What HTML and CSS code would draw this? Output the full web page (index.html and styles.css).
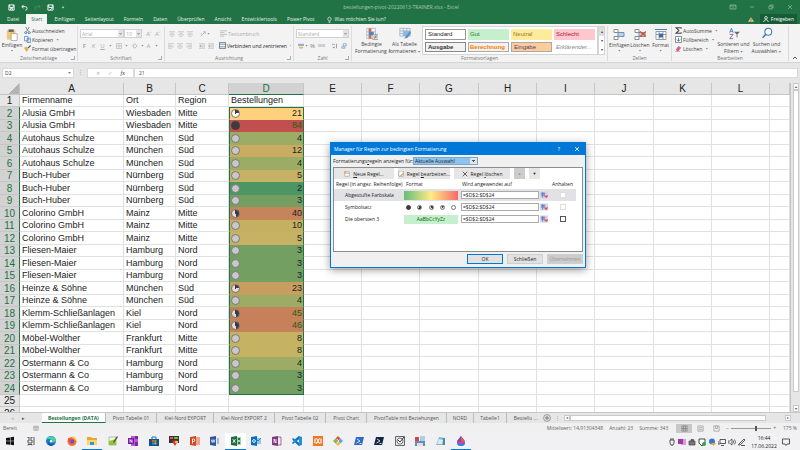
FILE: index.html
```html
<!DOCTYPE html>
<html lang="de">
<head>
  <meta charset="UTF-8">
  <meta name="viewport" content="width=device-width, initial-scale=1">
  <title>bestellungen-pivot-20220613-TRAINER.xlsx - Excel</title>
  <link rel="stylesheet" href="styles.css">
</head>
<body>
  <svg class="defs" aria-hidden="true">
    <symbol id="left" viewBox="0 0 8 8"><path d="M0 1h8M0 3h5M0 5h8M0 7h5" stroke="#bbb"/></symbol>
    <symbol id="center" viewBox="0 0 8 8"><path d="M0 1h8M2 3h4M0 5h8M2 7h4" stroke="#bbb"/></symbol>
    <symbol id="right" viewBox="0 0 8 8"><path d="M0 1h8M3 3h5M0 5h8M3 7h5" stroke="#bbb"/></symbol>
    <symbol id="indent" viewBox="0 0 8 8"><path d="M0 1h8M4 3h4M4 5h4M0 7h8" stroke="#bbb"/><path d="M3 2v4L0 4z" fill="#9ab"/></symbol>
    <symbol id="picker" viewBox="0 0 9 8"><rect width="9" height="8" fill="#cfd8ec"/><path d="M1 2h5M1 4h4M3 1v6" stroke="#5574b8"/><path d="M4 3l4 4M5 6h3V4" stroke="#d33" fill="none"/></symbol>
    <symbol id="cells" viewBox="0 0 12 12"><path d="M1 1h4v3H1zM1 8h4v3H1z" fill="#fff" stroke="#8a8a8a"/><path d="M5 4h6v4H5z" fill="#bcd3ea" stroke="#6d91b5"/></symbol>
  </svg>

  <header class="titlebar">
    <div class="quick">
      <button aria-label="Speichern"><svg viewBox="0 0 8 8"><path d="M1 1h6v6H1zM2 1v3h4V1M3 7V5h2v2" fill="none" stroke="#fff"/></svg></button>
      <button aria-label="Rückgängig"><svg viewBox="0 0 8 8"><path d="M3 1L1 3l2 2M1 3h4a2 2 0 0 1 0 4" fill="none" stroke="#fff"/></svg></button>
      <button aria-label="Wiederholen"><svg viewBox="0 0 8 8"><path d="M5 1l2 2-2 2M7 3H3a2 2 0 0 0 0 4" fill="none" stroke="#4a8e68"/></svg></button>
      <button aria-label="Speichern unter"><svg viewBox="0 0 8 8"><path d="M1 1h6v6H1zM2 1v3h4V1" fill="none" stroke="#fff"/><path d="M3 7l4-3" stroke="#fff"/></svg></button>
      <button aria-label="Anpassen"><svg viewBox="0 0 8 8"><path d="M2 3h3L3.500 5z" fill="#cfe3d7"/></svg></button>
    </div>
    <span class="doc">bestellungen-pivot-20220613-TRAINER.xlsx - Excel</span>
    <div class="winbuttons">
      <button aria-label="Menüband"><svg viewBox="0 0 8 8"><path d="M1 2h6v4H1zM1 3h6M4 6V4" fill="none" stroke="#8fbda1" stroke-width=".7"/></svg></button>
      <button aria-label="Minimieren"><svg viewBox="0 0 8 8"><path d="M2 4h4" stroke="#8fbda1" stroke-width=".7"/></svg></button>
      <button aria-label="Wiederherstellen"><svg viewBox="0 0 8 8"><path d="M2 3h3v3H2zM3 3V2h3v3H5" fill="none" stroke="#8fbda1" stroke-width=".7"/></svg></button>
      <button aria-label="Beenden"><svg viewBox="0 0 8 8"><path d="M2 2l4 4M6 2L2 6" stroke="#8fbda1" stroke-width=".7"/></svg></button>
    </div>
  </header>

  <nav class="tabs">
    <a href="#">Datei</a>
    <a href="#" class="active">Start</a>
    <a href="#">Einfügen</a>
    <a href="#">Seitenlayout</a>
    <a href="#">Formeln</a>
    <a href="#">Daten</a>
    <a href="#">Überprüfen</a>
    <a href="#">Ansicht</a>
    <a href="#">Entwicklertools</a>
    <a href="#">Power Pivot</a>
    <a href="#" class="tell"><svg viewBox="0 0 6 8"><path d="M2 5a2 2 0 1 1 2 0v1H2zM2 7.500h2" fill="none" stroke="#fff" stroke-width=".8"/></svg>Was möchten Sie tun?</a>
    <svg class="warn" viewBox="0 0 8 8"><path d="M4 1l4 6H0z" fill="#f6c58a"/><path d="M4 3v2M4 5.500v1" stroke="#6b4a20"/></svg>
    <a href="#" class="share"><svg viewBox="0 0 8 8"><circle cx="4" cy="2.500" r="1.800" fill="none" stroke="#fff"/><path d="M1 8c0-4 6-4 6 0" fill="none" stroke="#fff"/></svg>Freigeben</a>
  </nav>

  <section class="ribbon">
    <div class="group clipboard">
      <div class="tools">
        <button class="big"><svg viewBox="0 0 14 14"><path d="M1 2h10v11H1z" fill="#efc878"/><path d="M3 1h6v3H3z" fill="#666"/><path d="M6 6h7v8H6z" fill="#fff" stroke="#888" stroke-width=".7"/></svg>Einfügen<i></i></button>
        <div class="stack">
          <button><svg viewBox="0 0 8 8"><path d="M2 0l3 5M6 0L3 5" stroke="#777"/><circle cx="2" cy="6.500" r="1.200" fill="none" stroke="#2e75b6"/><circle cx="6" cy="6.500" r="1.200" fill="none" stroke="#2e75b6"/></svg>Ausschneiden</button>
          <button><svg viewBox="0 0 8 8"><path d="M.5.500h4v5h-4zM3.500 2.500h4v5h-4z" fill="#fff" stroke="#3b78b5" stroke-width=".8"/><path d="M4.500 4h2M4.500 6h2" stroke="#3b78b5" stroke-width=".6"/></svg>Kopieren <i></i></button>
          <button><svg viewBox="0 0 8 8"><path d="M0 3l3-1 2 3-2 3z" fill="#e9a94b"/><path d="M4 3l3-3 1 1-3 3z" fill="#555"/></svg>Format übertragen</button>
        </div>
      </div>
      <h2 class="launch">Zwischenablage</h2>
    </div>

    <div class="group font">
      <div class="tools lines">
        <div class="line">
          <select class="fname" aria-label="Schriftart"><option>Arial</option></select><select class="fsize" aria-label="Schriftgrad"><option>10</option></select>
          <button class="glyph large">A˄</button><button class="glyph">A˅</button>
        </div>
        <div class="line">
          <button class="glyph"><b>F</b></button><button class="glyph"><em>K</em></button><button class="glyph"><u>U</u></button><i></i>
          <button class="ic"><svg viewBox="0 0 8 8"><path d="M.5.500h7v7h-7zM4 0v8M0 4h8" fill="none" stroke="#bbb"/></svg></button><i></i>
          <button class="ic"><svg viewBox="0 0 8 8"><path d="M1 3l3-2 3 3-4 3z" fill="none" stroke="#aaa"/></svg></button><i></i>
          <button class="glyph">A</button><i></i>
        </div>
      </div>
      <h2 class="launch">Schriftart</h2>
    </div>

    <div class="group align">
      <div class="tools lines">
        <div class="line">
          <button class="ic"><svg><use href="#center"/></svg></button><button class="ic"><svg><use href="#center"/></svg></button><button class="ic"><svg><use href="#center"/></svg></button>
          <button class="ic gap"><svg viewBox="0 0 8 8"><path d="M1 7l6-6M4 1h3v3M1 3l2 2" fill="none" stroke="#aaa"/></svg></button><i></i>
          <button class="text pale wrap"><svg><use href="#left"/></svg>Textumbruch</button>
        </div>
        <div class="line">
          <button class="ic"><svg><use href="#left"/></svg></button><button class="ic"><svg><use href="#center"/></svg></button><button class="ic"><svg><use href="#right"/></svg></button>
          <button class="ic gap"><svg><use href="#indent"/></svg></button><button class="ic"><svg><use href="#indent"/></svg></button>
          <button class="text merge"><svg viewBox="0 0 8 8"><path d="M.5.500h7v7h-7zM0 2.500h8M0 5.500h8" fill="#fff" stroke="#3d5f82" stroke-width=".8"/></svg>Verbinden und zentrieren <i></i></button>
        </div>
      </div>
      <h2 class="launch">Ausrichtung</h2>
    </div>

    <div class="group number">
      <div class="tools lines">
        <div class="line"><select class="fformat" aria-label="Zahlenformat"><option>Standard</option></select></div>
        <div class="line">
          <button class="ic"><svg viewBox="0 0 8 8"><path d="M0 1h8v3H0z" fill="#8db6dc"/><ellipse cx="4" cy="6" rx="3" ry="1.500" fill="#efbb66"/></svg></button><i></i>
          <button class="glyph dark">%</button><button class="glyph dark tiny">000</button>
          <button class="ic gap"><svg viewBox="0 0 8 8"><path d="M1 1v2M3 5v2M6 1v6M1 6h2" stroke="#888"/><path d="M4 2H2" stroke="#5b93cc"/></svg></button><button class="ic"><svg viewBox="0 0 8 8"><path d="M3 1h4v3H3zM1 5h4v2H1z" fill="none" stroke="#7d9dbf"/></svg></button>
        </div>
      </div>
      <h2 class="launch">Zahl</h2>
    </div>

    <div class="group styles">
      <div class="tools">
        <button class="big wide"><svg viewBox="0 0 14 14"><path d="M1 1h10v12H1zM1 5h10M1 9h10M6 1v12" fill="#fff" stroke="#999" stroke-width=".7"/><path d="M3 1h3v4H3z" fill="#d6604d"/><path d="M3 5h6v4H3z" fill="#4a87c4"/><path d="M3 9h3v4H3z" fill="#d6604d"/><path d="M8 8h6v6H8z" fill="#fff" stroke="#777" stroke-width=".7"/><path d="M9 10h4M9 12h4M12 9l-2 4" stroke="#555" stroke-width=".7"/></svg>Bedingte<br>Formatierung <i></i></button>
        <button class="big wide"><svg viewBox="0 0 14 14"><path d="M1 1h12v9H1zM1 4h12M1 7h12M5 1v9M9 1v9" fill="#eef4fa" stroke="#8a9aab" stroke-width=".7"/><path d="M5 4h8v6H5z" fill="#8db8e2"/><path d="M13 4l-5 6-2 3 4-1 4-6z" fill="#5d8fc0"/></svg>Als Tabelle<br>formatieren <i></i></button>
        <div class="gallery">
          <button class="s-standard">Standard</button><button class="s-gut">Gut</button><button class="s-neutral">Neutral</button><button class="s-schlecht">Schlecht</button>
          <button class="s-ausgabe">Ausgabe</button><button class="s-berechnung">Berechnung</button><button class="s-eingabe">Eingabe</button><button class="s-erkl">Erklärender...</button>
        </div>
        <div class="gscroll"><button aria-label="Nach oben">▴</button><button aria-label="Nach unten">▾</button><button aria-label="Mehr">▾</button></div>
      </div>
      <h2>Formatvorlagen</h2>
    </div>

    <div class="group cellsgroup">
      <div class="tools">
        <button class="big"><svg><use href="#cells"/></svg>Einfügen<i></i></button>
        <button class="big"><svg viewBox="0 0 12 12"><use href="#cells"/><path d="M6 3l6 5M12 3L6 8" stroke="#d9532c" stroke-width="1.500"/></svg>Löschen<i></i></button>
        <button class="big"><svg viewBox="0 0 12 12"><path d="M1 3h10v8H1zM1 6h10M4 3v8M8 3v8" fill="#fff" stroke="#777" stroke-width=".7"/><path d="M0 1h12" stroke="#3f7fc0"/><path d="M4 5h4v4H4z" fill="#2f6fb2"/></svg>Format<i></i></button>
      </div>
      <h2>Zellen</h2>
    </div>

    <div class="group edit">
      <div class="tools">
        <div class="stack">
          <button><svg viewBox="0 0 8 8"><path d="M7 2V.8H1.200L4.500 4 1.200 7.200H7V6" fill="none" stroke="#444" stroke-width="1.200"/></svg>AutoSumme <i></i></button>
          <button><svg viewBox="0 0 8 8"><path d="M.5.500h7v7h-7z" fill="#fff" stroke="#777"/><path d="M4 2v4M2 4l2 2 2-2" fill="none" stroke="#2e75b6"/></svg>Füllbereich <i></i></button>
          <button><svg viewBox="0 0 8 8"><path d="M1 5l3-4 3 2-3 4H2z" fill="#d8627d"/><path d="M0 7.500h6" stroke="#999" stroke-width=".7"/></svg>Löschen <i></i></button>
        </div>
        <button class="big wide"><svg viewBox="0 0 14 14"><path d="M2 6l2-5 2 5M3 4.500h2" fill="none" stroke="#2e75b6"/><path d="M2 8h4l-4 5h4" fill="none" stroke="#8e4fa8"/><path d="M7 5h7l-3 3v4l-1-1V8z" fill="#666"/></svg>Sortieren und<br>Filtern <i></i></button>
        <button class="big wide"><svg viewBox="0 0 14 14"><circle cx="8.500" cy="5" r="4" fill="#fff" stroke="#3a78b8" stroke-width="1.200"/><path d="M5.500 8L2 12" stroke="#3a78b8" stroke-width="1.800"/></svg>Suchen und<br>Auswählen <i></i></button>
      </div>
      <h2>Bearbeiten</h2>
    </div>
    <button class="collapse" aria-label="Menüband reduzieren"><svg viewBox="0 0 6 6"><path d="M1 4l2-2 2 2" fill="none" stroke="#555"/></svg></button>
  </section>

  <div class="formulabar">
    <div class="namewrap"><input aria-label="Namenfeld" value="D2"><i></i></div>
    <span class="dots">⋮</span>
    <div class="fx"><button aria-label="Abbrechen">✕</button><button aria-label="Eingeben">✓</button><button class="fn"><em>fx</em></button></div>
    <input class="formula" aria-label="Bearbeitungsleiste" value="21">
  </div>

  <main class="sheet">
    <div class="grid">
      <table>
        <colgroup>
          <col class="c-num"><col class="c-a"><col class="c-b"><col class="c-c"><col class="c-d">
          <col class="c-n"><col class="c-n"><col class="c-w"><col class="c-n"><col class="c-n"><col class="c-w"><col class="c-n"><col class="c-n"><col>
        </colgroup>
        <thead>
          <tr><th class="corner"></th><th>A</th><th>B</th><th>C</th><th class="picked">D</th><th>E</th><th>F</th><th>G</th><th>H</th><th>I</th><th>J</th><th>K</th><th>L</th><th></th></tr>
        </thead>
        <tbody id="rows"></tbody>
      </table>
    </div>
    <div class="vscroll"><button aria-label="Nach oben">▴</button><div class="thumb"></div><button aria-label="Nach unten">▾</button></div>

    <div class="dialog" role="dialog" aria-labelledby="dlgtitle">
      <div class="dlghead"><span id="dlgtitle">Manager für Regeln zur bedingten Formatierung</span><button aria-label="Hilfe">?</button><button aria-label="Dialog schließen"><svg viewBox="0 0 6 6"><path d="M1 1l4 4M5 1L1 5" stroke="#fff" stroke-width=".8"/></svg></button></div>
      <div class="filter">
        <label for="scope">Formatierungs<u>r</u>egeln anzeigen für:</label>
        <select id="scope"><option>Aktuelle Auswahl</option></select>
      </div>
      <div class="rules">
        <div class="rulebar">
          <button class="r-new"><svg viewBox="0 0 8 8"><path d="M1 1h6v6H1zM1 3h6" fill="#fff" stroke="#888" stroke-width=".7"/><path d="M0 0h3v3H0z" fill="#f0b050"/></svg><span><u>N</u>eue Regel...</span></button>
          <button class="r-edit"><svg viewBox="0 0 8 8"><path d="M1 0h6v7H1z" fill="#fff" stroke="#5b86b5" stroke-width=".7"/><path d="M7 2L3 6 2 8l2-1 4-4z" fill="#e3a540"/></svg><span>Regel <u>b</u>earbeiten...</span></button>
          <button class="r-del"><svg viewBox="0 0 8 8"><path d="M1 1l6 6M7 1L1 7" stroke="#333"/></svg><span>Regel <u>l</u>öschen</span></button>
          <button class="arrow off" aria-label="Nach oben">▲</button>
          <button class="arrow" aria-label="Nach unten">▼</button>
        </div>
        <table class="rulelist">
          <thead><tr><th>Regel (in angez. Reihenfolge)</th><th>Format</th><th>Wird angewendet auf</th><th>Anhalten</th></tr></thead>
          <tbody>
            <tr class="current">
              <td>Abgestufte Farbskala</td><td><div class="scale"></div></td>
              <td><div class="ref"><input aria-label="Bereich Farbskala" value="=$D$2:$D$24"><button aria-label="Bereich wählen"><svg><use href="#picker"/></svg></button></div></td>
              <td><input type="checkbox" aria-label="Anhalten Farbskala" disabled></td>
            </tr>
            <tr>
              <td>Symbolsatz</td><td><div class="pies"><span class="pie p4"></span><span class="pie p3"></span><span class="pie p2"></span><span class="pie p1"></span><span class="pie p0"></span></div></td>
              <td><div class="ref"><input aria-label="Bereich Symbolsatz" value="=$D$2:$D$24"><button aria-label="Bereich wählen"><svg><use href="#picker"/></svg></button></div></td>
              <td><input type="checkbox" aria-label="Anhalten Symbolsatz" disabled></td>
            </tr>
            <tr>
              <td>Die obersten 3</td><td><div class="sample">AaBbCcYyZz</div></td>
              <td><div class="ref"><input aria-label="Bereich Oberste" value="=$D$2:$D$24"><button aria-label="Bereich wählen"><svg><use href="#picker"/></svg></button></div></td>
              <td><input type="checkbox" aria-label="Anhalten Oberste"></td>
            </tr>
          </tbody>
        </table>
      </div>
      <div class="dlgfoot"><button class="ok">OK</button><button>Schließen</button><button disabled>Übernehmen</button></div>
    </div>
  </main>

  <nav class="sheettabs">
    <div class="arrows"><button aria-label="Zurück" class="dim">◂</button><button aria-label="Weiter">▸</button></div>
    <a href="#" class="active">Bestellungen (DATA)</a>
    <a href="#">Pivot Tabelle 01</a>
    <a href="#">Kiel-Nord EXPORT</a>
    <a href="#">Kiel-Nord EXPORT 2</a>
    <a href="#">Pivot Tabelle 02</a>
    <a href="#">Pivot Chart</a>
    <a href="#">PivotTable mit Beziehungen</a>
    <a href="#" class="tight">NORD</a>
    <a href="#" class="tight">Tabelle1</a>
    <a href="#" class="cut">Bestellu</a>
    <span class="more">...</span>
    <button class="add" aria-label="Neues Blatt"><svg viewBox="0 0 8 8"><circle cx="4" cy="4" r="3.400" fill="none" stroke="#777" stroke-width=".7"/><path d="M4 2v4M2 4h4" stroke="#777"/></svg></button>
    <span class="dots">⋮</span>
    <div class="hscroll"><button aria-label="Nach links">◂</button><div class="thumb"></div><button aria-label="Nach rechts">▸</button></div>
  </nav>

  <footer class="status">
    <span>Bereit</span>
    <svg class="macro" viewBox="0 0 8 8"><path d="M1 1.500h6v5.500H1zM1 3h6M3 3v4M5 3v4" fill="none" stroke="#888" stroke-width=".7"/></svg>
    <span class="sums"><span>Mittelwert: 14,91304348</span><span>Anzahl: 23</span><span>Summe: 343</span></span>
    <div class="views">
      <button class="on" aria-label="Normal"><svg viewBox="0 0 8 8"><path d="M1 1h6v6H1zM1 4h6M3 1v6M5 1v6" fill="none" stroke="#777" stroke-width=".7"/></svg></button>
      <button aria-label="Seitenlayout"><svg viewBox="0 0 8 8"><path d="M1 1h6v6H1zM2 3h4M2 5h4" fill="none" stroke="#888" stroke-width=".7"/></svg></button>
      <button aria-label="Umbruchvorschau"><svg viewBox="0 0 8 8"><path d="M1 1h6v6H1zM3 1v3h2V1" fill="none" stroke="#888" stroke-width=".7"/></svg></button>
    </div>
    <div class="zoom"><button aria-label="Verkleinern">−</button><input type="range" min="0" max="100" value="64" aria-label="Zoom"><button aria-label="Vergrößern">+</button><span>175 %</span></div>
  </footer>

  <footer class="taskbar">
    <ul class="apps">
      <li><svg viewBox="0 0 10 10"><path d="M1 2l4-.6v3.400H1zM5.500 1.300L9 .8v4H5.500zM1 5.300h4v3.400L1 8.200zM5.500 5.300H9v4l-3.500-.5z" fill="#111"/></svg></li>
      <li><svg viewBox="0 0 10 10"><path d="M2 4h4v3H2zM2 1v1h4V1M2 9.500v-1h4v1M8 1v8" fill="none" stroke="#444" stroke-width=".9"/></svg></li>
      <li><svg viewBox="0 0 10 10"><circle cx="5" cy="5" r="5" fill="#1b76c8"/><path d="M0 4C1-1 9-1 10 4c0 3-4 3-4 1.500C6 3 2 2 0 4z" fill="#46cfa0"/><path d="M3 6c0 2 3 3.500 6 2-1 1-3 2-5 1.500C2 8 2 6 3 6z" fill="#0b4b96"/><circle cx="5" cy="5.300" r="1.200" fill="#fff"/></svg></li>
      <li><svg viewBox="0 0 10 10"><circle cx="5" cy="5.500" r="4.500" fill="#f6732b"/><path d="M5 1c3-2 5 3 4.500 5C9 3 7 4 5 1z" fill="#fcd13b"/><circle cx="5" cy="5.500" r="2.300" fill="#7b45c8"/><path d="M1 2l2 1 2 2-3 1z" fill="#f23d50"/></svg></li>
      <li class="open"><svg viewBox="0 0 10 10"><path d="M0 1h4l1 1h5v7H0z" fill="#e8a92c"/><path d="M0 4h10v5H0z" fill="#fad66e"/><path d="M3 6h4v3H3z" fill="#3d8fd6"/></svg></li>
      <li><svg viewBox="0 0 10 10"><path d="M1 1h7v8H1z" fill="#f2f7e6" stroke="#879b5d" stroke-width=".6"/><path d="M1 5l7-2v6H1z" fill="#8cc63c"/><path d="M9 0L5 6l1 1 4-6z" fill="#6c5331"/></svg></li>
      <li><svg viewBox="0 0 10 10"><path d="M3 0h7v10H3z" fill="#b95bd0"/><path d="M7 0h3v3H7zM7 6h3v4H7z" fill="#8325a0"/><path d="M0 2h6v6H0z" fill="#7719aa"/><path d="M2 6.500v-3l2 3v-3" fill="none" stroke="#fff" stroke-width=".8"/></svg></li>
      <li><svg viewBox="0 0 10 10"><path d="M3 3V1h4v2" fill="none" stroke="#1573c4"/><path d="M0 3h10v7H0z" fill="#174f8c"/><path d="M3 4h2v2H3z" fill="#f25022"/><path d="M5.400 4h2v2h-2z" fill="#7fba00"/><path d="M3 6.400h2v2H3z" fill="#00a4ef"/><path d="M5.400 6.400h2v2h-2z" fill="#ffb900"/></svg></li>
      <li><svg viewBox="0 0 10 10"><path d="M0 0h10v7H0z" fill="#35313a"/><path d="M1 1h3v2H1z" fill="#e94f4f"/><path d="M5 1h4v2H5z" fill="#69b64c"/><path d="M3 4l2 1 2-1 2 1-3 5-2-3z" fill="#d43b35"/><path d="M6 5h3v2H6z" fill="#f2ba32"/></svg></li>
      <li><svg viewBox="0 0 10 10"><path d="M4 1h6v8H4z" fill="#f3a18b"/><path d="M0 1l6-1v10L0 9z" fill="#d24726"/><path d="M2.500 7.500V3h1a1.200 1.200 0 0 1 0 2.500h-1" fill="none" stroke="#fff" stroke-width=".9"/></svg></li>
      <li><svg viewBox="0 0 10 10"><path d="M4 1h6v8H4z" fill="#e7eef8"/><path d="M7 3h2M7 5h2M7 7h2" stroke="#2b579a" stroke-width=".7"/><path d="M0 1l6-1v10L0 9z" fill="#2b579a"/><path d="M1.200 3.500l1 3 .9-3 .9 3 1-3" fill="none" stroke="#fff" stroke-width=".7"/></svg></li>
      <li class="open focus"><svg viewBox="0 0 10 10"><path d="M4 1h6v8H4z" fill="#a4d5b7"/><path d="M7 2h2v2H7zM7 6h2v2H7z" fill="#217346"/><path d="M0 1l6-1v10L0 9z" fill="#1d6b40"/><path d="M1.800 3.200l2.600 3.600M4.400 3.200L1.800 6.800" stroke="#fff" stroke-width=".9"/></svg></li>
      <li><svg viewBox="0 0 10 10"><path d="M4 2h6v6H4z" fill="#8ec6ef"/><path d="M4 2l3 3 3-3" fill="none" stroke="#0a64ad" stroke-width=".7"/><path d="M0 1l6-1v10L0 9z" fill="#0a6ebd"/><circle cx="3" cy="5" r="1.400" fill="none" stroke="#fff" stroke-width=".9"/></svg></li>
      <li><svg viewBox="0 0 10 10"><path d="M5 1h4v8H5z" fill="#f2e6f5" stroke="#80397b" stroke-width=".7"/><path d="M0 1l6-1v10L0 9z" fill="#80397b"/><path d="M2 7V3l2 4V3" fill="none" stroke="#fff" stroke-width=".8"/></svg></li>
      <li><svg viewBox="0 0 10 10"><path d="M7 0l3 1v8l-3 1-6-5.500z" fill="#2490d8"/><path d="M7 3v4L4.500 5z" fill="#f0f0f0"/><path d="M0 3l1-1 6 5v3zM0 7l1 1 6-5V0z" fill="#0a72bf"/></svg></li>
      <li><svg viewBox="0 0 10 10"><path d="M0 0h10v10H0z" fill="#f37623"/><path d="M3 2.500c2 0 2 5 4 5M7 2.500c-2 0-2 5-4 5M2 2.500v5M8 2.500v5" fill="none" stroke="#fff" stroke-width="1.100"/></svg></li>
      <li><svg viewBox="0 0 10 10"><path d="M5 0l2.500 2.500L5 5 2.500 2.500z" fill="#e84e3c"/><path d="M7.500 2.500L10 5 7.500 7.500 5 5z" fill="#5aa8dd"/><path d="M5 5l2.500 2.500L5 10 2.500 7.500z" fill="#f1b83c"/><path d="M2.500 2.500L5 5 2.500 7.500 0 5z" fill="#7bbd54"/><path d="M4 3l2 2-2 2" fill="none" stroke="#fff" stroke-width=".7"/></svg></li>
      <li><svg viewBox="0 0 10 10"><path d="M2 1h8L8 9H0z" fill="#2f6bc6"/><path d="M3 3l3 2-3.500 2M5.500 7.500h2" fill="none" stroke="#fff" stroke-width=".8"/></svg></li>
      <li><svg viewBox="0 0 10 10"><path d="M2 1h8L8 9H0z" fill="#12263f"/><path d="M3 3l3 2-3.500 2M5.500 7.500h2" fill="none" stroke="#fff" stroke-width=".8"/></svg></li>
      <li><svg viewBox="0 0 10 10"><path d="M.5.500h9v9h-9z" fill="#e8e8e8" stroke="#666"/><circle cx="5" cy="5" r="3" fill="#fff" stroke="#555" stroke-width=".8"/><path d="M3 4l2 2 4-5" fill="none" stroke="#333"/></svg></li>
      <li><svg viewBox="0 0 10 10"><path d="M0 1h4v4H0z" fill="#d64545"/><path d="M5 0h5v6H5z" fill="#a9cdea"/><path d="M0 5h10v5H0z" fill="#5b8fc2"/><path d="M2 7h6v3H2z" fill="#f2d9c8"/></svg></li>
      <li><svg viewBox="0 0 10 10"><path d="M3 1l6 1v7H0l2-5z" fill="#7eb6c8"/><path d="M3 3l4 1-1 4H1z" fill="#d9edf2"/><path d="M7 2l2 0v7H7z" fill="#548a9c"/></svg></li>
      <li class="open"><svg viewBox="0 0 10 10"><path d="M5 0c2 3 4 4 4 6.500a4 3.500 0 0 1-8 0C1 4 3 3 5 0z" fill="#2196e8"/><path d="M5 0c2 3 4 4 4 6L5 5z" fill="#f0543f"/><path d="M5 0C3 3 1 4 1 6.500L5 6z" fill="#8e3fc1"/><path d="M2 7l3-2 4 2-3 3H4z" fill="#e63a8c"/><path d="M1 7c2 2 5 1 8 0 0 2-2 3-4 3S1 9 1 7z" fill="#1e88e5"/></svg></li>
    </ul>
    <div class="tray">
      <svg viewBox="0 0 8 8"><path d="M2 2h4v3a2 2 0 0 1-4 0zM3 0v2M5 0v2M4 7v1" fill="none" stroke="#333" stroke-width=".8"/></svg>
      <svg viewBox="0 0 8 8"><path d="M3 1h5v6H3z" fill="#d99ad9"/><path d="M0 1h5v5H0z" fill="#a238ad"/></svg>
      <svg viewBox="0 0 8 8"><path d="M1 3h6v4H1zM3 3V1.500h2.500V3" fill="#777" stroke="#444" stroke-width=".7"/></svg>
      <svg viewBox="0 0 8 8"><path d="M1 1h6v4L4 8 1 5z" fill="#fff" stroke="#333" stroke-width=".9"/><circle cx="6" cy="6" r="2" fill="#2da44e"/></svg>
      <svg viewBox="0 0 8 8"><circle cx="4" cy="3.500" r="3" fill="#3878c7"/><path d="M3 5h5L5.500 8z" fill="#f0a92e"/></svg>
      <svg viewBox="0 0 8 8"><path d="M2 1.500h5.500v4H2zM3 7.500h3M0 3v3h2" fill="none" stroke="#333" stroke-width=".8"/></svg>
      <svg viewBox="0 0 8 8"><path d="M0 3h1.500L4 1v6L1.500 5H0zM5 2.500q1.200 1.500 0 3M6.500 1.500q2 2.500 0 5" fill="none" stroke="#333" stroke-width=".7"/></svg>
      <svg viewBox="0 0 8 8"><path d="M1 6l5-5 1 1-5 5H.5zM3 7.500h4" fill="none" stroke="#333" stroke-width=".8"/></svg>
      <div class="clock">16:44<br>17.06.2022</div>
      <svg viewBox="0 0 8 8"><path d="M.5 1h7v5H5L4 7.500 3 6H.5z" fill="none" stroke="#333" stroke-width=".8"/></svg>
    </div>
  </footer>

  <script src="sheet.js"></script>
</body>
</html>
```
FILE: styles.css
```css
* {
  box-sizing: border-box;
}

body {
  margin: 0;
  height: 100vh;
  display: flex;
  flex-direction: column;
  overflow: hidden;
  background: #e6e6e6;
  color: #444;
  font: 5px/8px "Open Sans", "Noto Sans", sans-serif;
}

button, input, select {
  font: inherit;
  color: inherit;
  margin: 0;
  padding: 0;
  border: 0;
  background: none;
  border-radius: 0;
  min-width: 0;
}

a {
  color: inherit;
  text-decoration: none;
}

svg {
  display: block;
  width: 8px;
  height: 8px;
  flex: none;
}

.defs {
  width: 0;
  height: 0;
  position: absolute;
}

select {
  appearance: none;
}

/* small drop-down arrow */
i {
  display: inline-block;
  width: 3px;
  height: 2px;
  background: #888;
  clip-path: polygon(0 0, 100% 0, 50% 100%);
  vertical-align: middle;
}

/* title bar */
.titlebar {
  display: grid;
  grid-template-columns: 1fr auto 1fr;
  align-items: center;
  height: 14px;
  padding: 0 6px 0 8px;
  background: #217346;
  color: #a6cbb4;
}

.quick, .winbuttons {
  display: flex;
  align-items: center;
}

.quick {
  gap: 6px;
}

.quick svg {
  width: 7px;
  height: 7px;
}

.winbuttons {
  justify-content: flex-end;
  gap: 11px;
}

.tabs {
  display: flex;
  align-items: stretch;
  height: 10px;
  padding: 0 3px 0 1px;
  background: #217346;
  color: #e4f0e9;
  line-height: 10px;
}

.tabs a {
  padding: 0 5px;
  white-space: nowrap;
}

.tabs a:first-child {
  padding-left: 6px;
  padding-right: 7px;
}

.tabs .active {
  background: #f3f3f3;
  color: #217346;
  margin-right: 2px;
}

.tabs .tell {
  display: flex;
  align-items: center;
  gap: 3px;
  margin-left: 2px;
}

.tell svg {
  width: 5px;
  height: 7px;
}

.warn {
  width: 6px;
  height: 7px;
  margin: 2px 6px 0 auto;
}

.tabs .share {
  display: flex;
  align-items: center;
  gap: 2px;
  padding: 0 3px;
  background: #185c37;
  color: #fff;
}

.share svg {
  width: 6px;
  height: 6px;
}

/* ribbon */
.ribbon {
  display: flex;
  height: 39px;
  background: #f3f3f3;
  border-bottom: 1px solid #d5d5d5;
}

.group {
  display: flex;
  flex-direction: column;
  border-right: 1px solid #dcdcdc;
  margin: 2px 0 1px;
}

.group h2 {
  position: relative;
  margin: auto 0 0;
  font-size: 5px;
  font-weight: normal;
  line-height: 6px;
  text-align: center;
  color: #777;
}

/* dialog launcher in the group's corner */
.launch::after {
  content: "";
  position: absolute;
  right: 2px;
  bottom: 1px;
  width: 3px;
  height: 3px;
  border: solid #aaa;
  border-width: 0 1px 1px 0;
}

.clipboard { width: 78px; }
.font { width: 87px; }
.align { width: 129px; }
.number { width: 58px; }
.styles { width: 256px; }
.cellsgroup { width: 64px; }
.edit { width: 117px; }

.tools {
  display: flex;
  height: 29px;
}

.big {
  display: block;
  width: 21px;
  line-height: 7px;
  text-align: center;
  white-space: nowrap;
  padding-top: 1px;
}

.big svg {
  width: 12px;
  height: 13px;
  margin: 0 auto 1px;
}

.big:not(.wide) > i {
  display: block;
  margin: 1px auto 3px;
}

.wide {
  width: 33px;
}

.clipboard .big {
  width: 24px;
}

.stack button {
  display: flex;
  align-items: center;
  gap: 1px;
  height: 9px;
  white-space: nowrap;
}

.stack svg {
  width: 7px;
  height: 7px;
}

.stack i {
  margin-left: 2px;
}

.lines {
  flex-direction: column;
  padding: 3px 2px 0;
  gap: 3px;
}

.line {
  display: flex;
  align-items: center;
  height: 9px;
}

.line select {
  height: 9px;
  border: 1px solid #d0d0d0;
  padding-left: 1px;
  color: #aaa;
  background:
    conic-gradient(from -45deg at 50% 100%, #aaa 90deg, transparent 0) right 1px center / 3px 2px no-repeat,
    linear-gradient(#e4e4e4, #e4e4e4) right / 5px 100% no-repeat #fff;
}

.fname { width: 46px; }
.fsize { width: 18px; }
.fformat { width: 54px; }

.glyph {
  width: 9px;
  color: #aaa;
  font-size: 6px;
  white-space: nowrap;
}

.dark {
  color: #777;
}

.large {
  margin-left: 3px;
}

.tiny {
  font-size: 4px;
}

.ic {
  width: 9px;
}

.ic svg {
  width: 6px;
  height: 6px;
  margin: 0 auto;
}

.font .ic, .font .line i {
  margin-left: 2px;
}

.gap {
  margin-left: 4px;
}

.text {
  display: flex;
  align-items: center;
  gap: 1px;
  margin-left: 4px;
  white-space: nowrap;
}

.text svg {
  width: 7px;
  height: 7px;
}

.text i {
  margin-left: 2px;
}

.wrap {
  margin-left: 10px;
}

.merge {
  color: #222;
}

.pale {
  color: #aaa;
}

.styles .tools {
  padding-left: 3px;
}

.gallery {
  display: grid;
  grid-template-columns: repeat(4, 1fr);
  gap: 2px;
  flex: 1;
  margin-left: 1px;
  padding: 2px;
  background: #fff;
  border: 1px solid #d4d4d4;
  font-family: "Liberation Sans", Arial, sans-serif;
  font-size: 6px;
}

.gallery button {
  padding-left: 2px;
  text-align: left;
  white-space: nowrap;
  overflow: hidden;
}

.gallery .s-standard { border: 1px solid #999; color: #222; }
.gallery .s-gut { background: #c6efce; color: #1b7a2b; }
.gallery .s-neutral { background: #ffeb9c; color: #a6761c; }
.gallery .s-schlecht { background: #ffc7ce; color: #b0202c; }
.gallery .s-ausgabe { border: 1px solid #888; background: #f2f2f2; color: #333; font-weight: bold; }
.gallery .s-berechnung { border: 1px solid #aaa; background: #f2f2f2; color: #fa7d00; font-weight: bold; padding-left: 1px; }
.gallery .s-eingabe { border: 1px solid #aaa; background: #ffcc99; color: #3f3f76; }
.gallery .s-erkl { color: #888; font-style: italic; }

.gscroll {
  display: grid;
  width: 7px;
  margin-right: 2px;
  border: 1px solid #d4d4d4;
  background: #fff;
  font-size: 4px;
}

.gscroll button:first-child {
  background: #ddd;
}

.cellsgroup .tools, .edit .tools {
  padding-left: 1px;
}

.edit .stack {
  width: 44px;
  padding-left: 2px;
}

.collapse {
  margin: auto 2px 1px auto;
}

.collapse svg {
  width: 6px;
  height: 6px;
}

/* formula bar */
.formulabar {
  display: flex;
  height: 20px;
  padding: 5px 2px;
}

.namewrap, .formula, .fx {
  display: flex;
  align-items: center;
  height: 10px;
  background: #fff;
  border: 1px solid #dadada;
}

.namewrap {
  width: 72px;
  padding: 0 2px;
}

.namewrap input {
  flex: 1;
}

.dots {
  width: 13px;
  text-align: center;
  color: #999;
}

.fx {
  width: 47px;
  justify-content: space-evenly;
  color: #aaa;
}

.fn {
  color: #333;
  font-family: "Liberation Serif", serif;
  font-size: 6px;
}

.formulabar .formula {
  flex: 1;
  padding: 0 4px;
  background: #fff;
  border: 1px solid #dadada;
}

/* sheet */
.sheet {
  position: relative;
  display: flex;
  flex: 1;
  min-height: 0;
}

.grid {
  flex: 1;
  min-width: 0;
  overflow: hidden;
  background: #fff;
  border-right: 1px solid #c4c4c4;
}

.grid table {
  width: 100%;
  table-layout: fixed;
  border-collapse: separate;
  border-spacing: 0;
  font-family: "Liberation Sans", Arial, sans-serif;
  font-size: 9px;
  line-height: 11px;
  color: #222;
}

.c-num { width: 20px; }
.c-a { width: 104px; }
.c-b { width: 52px; }
.c-c { width: 53px; }
.c-d { width: 75px; }
.c-n { width: 58px; }
.c-w { width: 59px; }

.grid th, .grid td {
  padding: 0 1px 0 2px;
  border-right: 1px solid #e1e1e1;
  border-bottom: 1px solid #e1e1e1;
  white-space: nowrap;
  overflow: hidden;
  text-align: left;
}

.grid tr { height: 12px; }
.grid tbody tr:nth-child(even) { height: 13px; }

.grid th {
  padding: 0;
  background: #e6e6e6;
  border-color: #c6c6c6;
  font-size: 10px;
  font-weight: normal;
  text-align: center;
}

.grid .corner {
  background: linear-gradient(135deg, transparent 65%, #b4b4b4 65%) #e6e6e6;
}

.grid .picked {
  background: #d2d2d2;
  color: #217346;
  border-color: #217346;
}

.grid thead .picked {
  border-right-color: #c6c6c6;
}

.grid tbody .picked {
  border-bottom-color: #c6c6c6;
}

.grid .value {
  padding-left: 1px;
  border-color: transparent #217346 transparent transparent;
  border-left: 1px solid #217346;
}

.grid .value.first { border-top: 1px solid #217346; }
.grid .value.last { border-bottom-color: #217346; }

.value div {
  display: flex;
  align-items: center;
  justify-content: space-between;
}

.value.top3 {
  color: #275f0c;
}

.pie {
  width: 9px;
  height: 9px;
  border: 1px solid #777;
  border-radius: 50%;
  background: #c8c8c8;
}

.p1 { background: conic-gradient(#3c3c3c 25%, #ddd 25%) border-box; }
.p2 { background: conic-gradient(#3c3c3c 50%, #ddd 50%) border-box; }
.p3 { background: conic-gradient(#3c3c3c 75%, #ddd 75%) border-box; }
.p4 { background: #3c3c3c; border-color: #3c3c3c; }
.first .p1 { background: conic-gradient(#3c3c3c 25%, #fff 25%) border-box; }

.vscroll {
  display: flex;
  flex-direction: column;
  width: 9px;
  padding: 0 1px 0 2px;
  font-size: 4px;
}

.vscroll button, .vscroll .thumb, .hscroll button, .hscroll .thumb {
  background: #fff;
  border: 1px solid #c9c9c9;
}

.vscroll button {
  height: 7px;
  line-height: 5px;
}

.vscroll .thumb {
  flex: 1;
  margin-bottom: 13px;
}

/* rules dialog */
.dialog {
  position: absolute;
  left: 330px;
  top: 59px;
  width: 256px;
  background: #f0f0f0;
  border: 1px solid #0078d7;
  box-shadow: 0 2px 8px rgba(0, 0, 0, 0.4);
  color: #222;
}

.dlghead {
  display: flex;
  align-items: center;
  gap: 14px;
  height: 12px;
  padding: 0 3px;
  background: #0078d7;
  color: #fff;
}

.dlghead span {
  flex: 1;
}

.dlghead svg {
  width: 6px;
  height: 6px;
  margin-right: 2px;
}

.filter {
  display: flex;
  align-items: center;
  gap: 4px;
  height: 12px;
  padding-left: 2px;
}

.filter label {
  width: 76px;
  white-space: nowrap;
}

.filter select {
  width: 65px;
  height: 8px;
  padding-left: 1px;
  line-height: 6px;
  border: 1px solid #7aa7d0;
  background:
    conic-gradient(from -45deg at 50% 100%, #555 90deg, transparent 0) right 2px center / 3px 2px no-repeat,
    linear-gradient(#e4e4e4, #e4e4e4) right / 7px 100% no-repeat #8fc3ee;
}

.rules {
  height: 85px;
  margin: 0 2px;
  border: 1px solid #8c8c8c;
  background: #fff;
}

.rulebar {
  display: flex;
  height: 11px;
  gap: 4px;
  background: #fff;
}

.rulebar button {
  display: flex;
  align-items: center;
  justify-content: center;
  gap: 3px;
  background: #e6e6e6;
  white-space: nowrap;
}

.rulebar svg {
  width: 6px;
  height: 6px;
}

.rulebar .r-new { width: 60px; }
.rulebar .r-edit { width: 52px; }
.rulebar .r-del { width: 56px; }
.rulebar .arrow { width: 11px; font-size: 4px; }
.rulebar .off { background: #ccc; color: #999; }

.rulelist {
  width: 242px;
  table-layout: fixed;
  border-spacing: 0;
}

.rulelist th {
  height: 10px;
  padding: 0 0 0 2px;
  font-weight: normal;
  text-align: left;
  white-space: nowrap;
}

.rulelist th:nth-child(1) { width: 70px; }
.rulelist th:nth-child(2) { width: 54px; }
.rulelist th:nth-child(3) { width: 92px; padding-left: 4px; }

.rulelist td {
  height: 12px;
  padding: 0;
}

.rulelist td:first-child {
  padding-left: 11px;
}

.current {
  background: #e1e1e6;
}

.scale, .sample {
  height: 9px;
}

.scale {
  background: linear-gradient(90deg, #63be7b, #ffeb84, #f8696b);
}

.sample {
  background: #c6efce;
  color: #006100;
  text-align: center;
}

.pies {
  display: flex;
  justify-content: space-between;
  padding: 0 2px;
}

.pies .pie {
  width: 5px;
  height: 5px;
}

.pies .p0 {
  background: #fff;
}

.ref {
  display: flex;
  gap: 1px;
  padding-left: 3px;
}

.ref input {
  width: 78px;
  height: 8px;
  padding: 0 1px;
  background: #fff;
  border: 1px solid #aaa;
}

.ref button {
  width: 9px;
}

.rulelist [type="checkbox"] {
  appearance: none;
  display: block;
  width: 6px;
  height: 6px;
  margin-left: 10px;
  border: 1px solid #555;
  background: #fff;
}

.rulelist [type="checkbox"]:disabled {
  border-color: #ddd;
}

.dlgfoot {
  display: flex;
  justify-content: flex-end;
  gap: 4px;
  padding: 2px 2px 3px;
}

.dlgfoot button {
  width: 36px;
  height: 10px;
  background: #e1e1e1;
  border: 1px solid #cfcfcf;
}

.dlgfoot .ok {
  border-color: #0078d7;
}

.dlgfoot button:disabled {
  background: #ccc;
  color: #999;
}

/* sheet tabs */
.sheettabs {
  display: flex;
  height: 11px;
  padding-right: 9px;
  border-top: 1px solid #c6c6c6;
  color: #555;
  line-height: 10px;
}

.arrows {
  display: flex;
  gap: 8px;
  width: 42px;
  padding-left: 11px;
}

.arrows .dim {
  color: #bbb;
}

.sheettabs a {
  padding: 0 7px;
  border-right: 1px solid #bbb;
  white-space: nowrap;
}

.sheettabs .active {
  background: #fff;
  color: #217346;
  font-weight: bold;
  border-bottom: 1px solid #217346;
  padding: 0 6px;
}

.sheettabs .tight {
  padding: 0 6px;
}

.sheettabs .cut {
  width: 25px;
  padding-right: 0;
  border: 0;
  overflow: hidden;
}

.more {
  margin: 0 5px 0 2px;
}

.hscroll {
  display: flex;
  flex: 1;
  padding: 2px 0;
  font-size: 4px;
  line-height: 4px;
}

.hscroll button {
  width: 6px;
}

.hscroll .thumb {
  flex: 1;
  margin-right: 19px;
}

/* status bar */
.status {
  display: flex;
  align-items: center;
  height: 10px;
  padding: 0 3px;
  background: #f0f0f0;
  color: #666;
}

.macro {
  width: 6px;
  height: 6px;
  margin-left: 16px;
}

.sums {
  display: flex;
  gap: 6px;
  margin-left: auto;
}

.views {
  display: flex;
  margin: 0 2px 0 8px;
}

.views button {
  width: 16px;
  height: 9px;
}

.views .on {
  background: #c8c8c8;
}

.views svg {
  width: 7px;
  height: 7px;
  margin: 0 auto;
}

.zoom {
  display: flex;
  align-items: center;
  gap: 2px;
}

.zoom input {
  appearance: none;
  width: 40px;
  height: 6px;
  background: linear-gradient(#999, #999) center / 100% 1px no-repeat;
}

.zoom input::-webkit-slider-thumb {
  appearance: none;
  width: 2px;
  height: 5px;
  background: #555;
}

.zoom span {
  margin-left: 5px;
}

/* taskbar */
.taskbar {
  display: flex;
  justify-content: space-between;
  height: 17px;
  background: #f1f1f3;
  color: #222;
}

.apps {
  display: flex;
  margin: 0;
  padding: 0;
  list-style: none;
}

.apps li {
  display: flex;
  align-items: center;
  justify-content: center;
  width: 20px;
  border-bottom: 1px solid transparent;
}

.apps li:nth-child(even) {
  width: 21px;
}

.apps svg {
  width: 10px;
  height: 10px;
}

.apps .open {
  border-color: #0078d7;
}

.apps .focus {
  background: #fff;
}

.tray {
  display: flex;
  align-items: center;
  gap: 2px;
  padding-right: 10px;
}

.clock {
  width: 28px;
  margin: 0 2px;
  text-align: center;
}
```
FILE: sheet.js
```javascript
// company, city, region, orders
const orders = [
  ["Alusia GmbH", "Wiesbaden", "Mitte", 21],
  ["Alusia GmbH", "Wiesbaden", "Mitte", 84],
  ["Autohaus Schulze", "München", "Süd", 4],
  ["Autohaus Schulze", "München", "Süd", 12],
  ["Autohaus Schulze", "München", "Süd", 4],
  ["Buch-Huber", "Nürnberg", "Süd", 5],
  ["Buch-Huber", "Nürnberg", "Süd", 2],
  ["Buch-Huber", "Nürnberg", "Süd", 3],
  ["Colorino GmbH", "Mainz", "Mitte", 40],
  ["Colorino GmbH", "Mainz", "Mitte", 10],
  ["Colorino GmbH", "Mainz", "Mitte", 5],
  ["Fliesen-Maier", "Hamburg", "Nord", 3],
  ["Fliesen-Maier", "Hamburg", "Nord", 3],
  ["Fliesen-Maier", "Hamburg", "Nord", 3],
  ["Heinze & Söhne", "München", "Süd", 23],
  ["Heinze & Söhne", "München", "Süd", 4],
  ["Klemm-Schließanlagen", "Kiel", "Nord", 45],
  ["Klemm-Schließanlagen", "Kiel", "Nord", 46],
  ["Möbel-Wolther", "Frankfurt", "Mitte", 8],
  ["Möbel-Wolther", "Frankfurt", "Mitte", 8],
  ["Ostermann & Co", "Hamburg", "Nord", 4],
  ["Ostermann & Co", "Hamburg", "Nord", 3],
  ["Ostermann & Co", "Hamburg", "Nord", 3]
];

const scale = {
  2: "#4d9663", 3: "#739f62", 4: "#9dac65", 5: "#c6b164", 8: "#c5b262", 10: "#c5b062",
  12: "#c7ac62", 21: "#ffd17d", 23: "#c79d60", 40: "#c6845b", 45: "#c6805a", 46: "#c6805a", 84: "#c14f50"
};

function pieFor(n) {
  if (n >= 80) return "p4";
  if (n >= 40) return "p2";
  if (n >= 20) return "p1";
  return "p0";
}

const empty = "<td></td>".repeat(9);
let html = "<tr><th>1</th><td>Firmenname</td><td>Ort</td><td>Region</td><td>Bestellungen</td>" + empty + "</tr>";

orders.forEach(function(row, i) {
  const n = row[3];
  let cls = "value";
  if (i === 0) cls += " first";
  if (i === orders.length - 1) cls += " last";
  if (n >= 45) cls += " top3";
  html += '<tr><th class="picked">' + (i + 2) + "</th>";
  html += "<td>" + row[0].replace("&", "&amp;") + "</td><td>" + row[1] + "</td><td>" + row[2] + "</td>";
  html += '<td class="' + cls + '" style="background-color: ' + scale[n] + '"><div><span class="pie ' + pieFor(n) + '"></span>' + n + "</div></td>";
  html += empty + "</tr>";
});

html += "<tr><th>25</th>" + "<td></td>".repeat(13) + "</tr>";
html += "<tr><th>26</th>" + "<td></td>".repeat(13) + "</tr>";
document.getElementById("rows").innerHTML = html;
```
